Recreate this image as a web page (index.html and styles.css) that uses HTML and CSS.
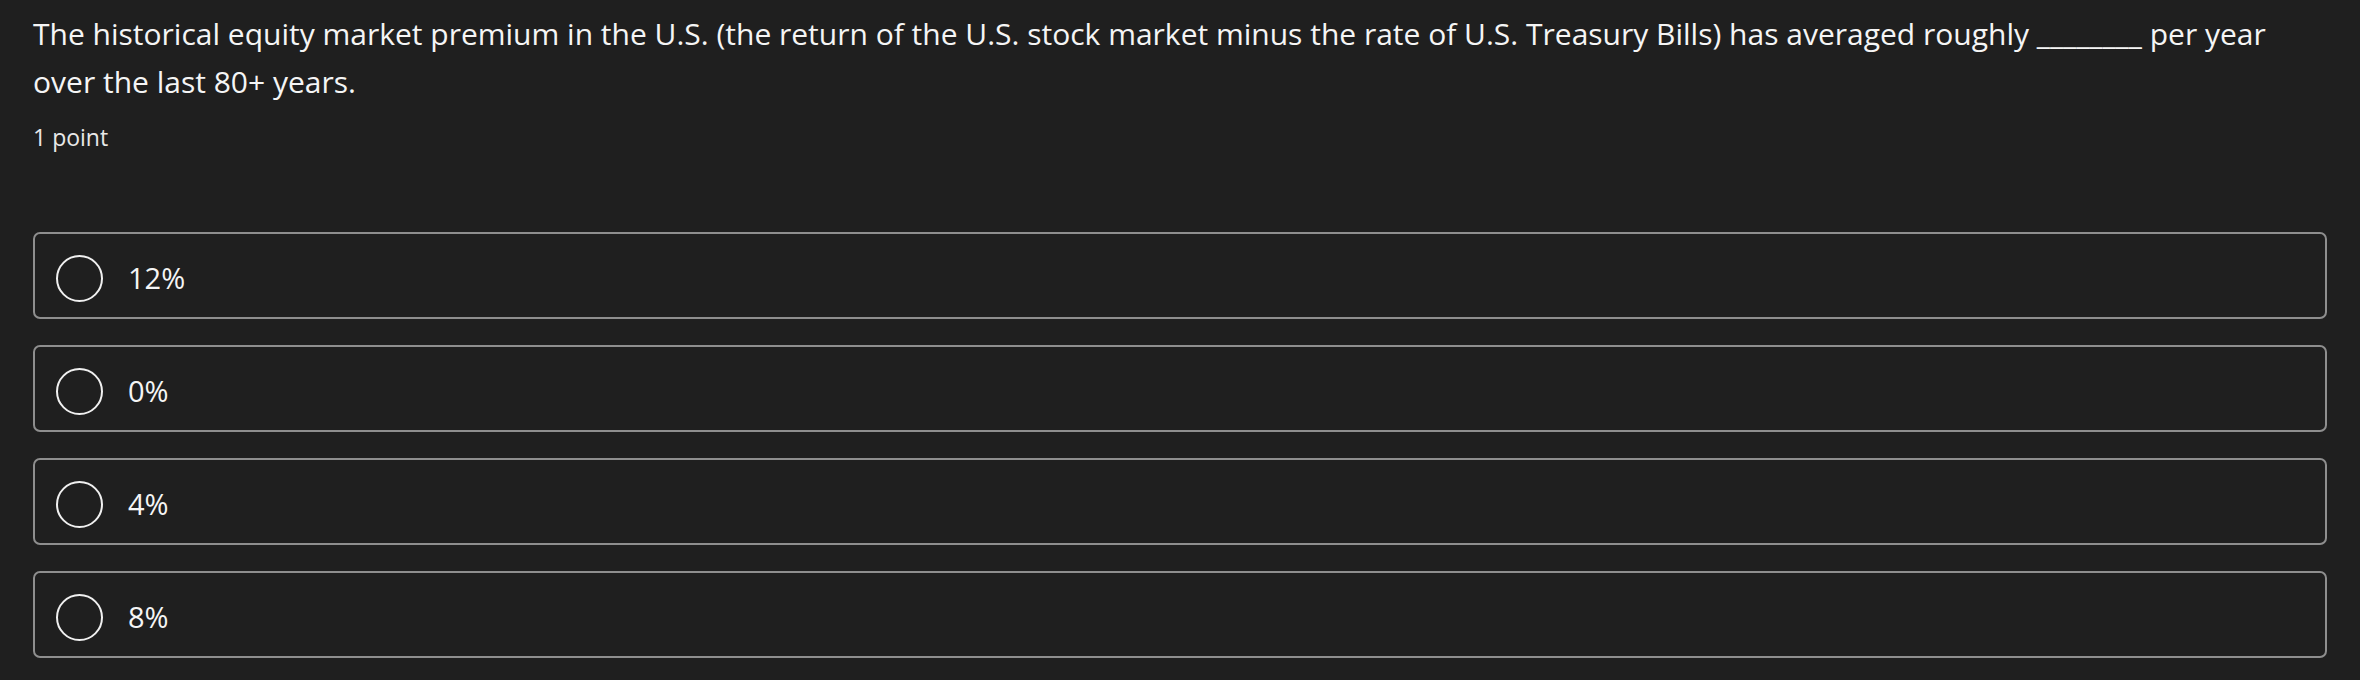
FILE: index.html
```html
<!DOCTYPE html>
<html lang="en">
<head>
<meta charset="utf-8">
<title>Quiz question</title>
<link rel="stylesheet" href="styles.css">
</head>
<body>
<main class="question">
  <div class="prompt">
    <p class="prompt-text">The historical equity market premium in the U.S. (the return of the U.S. stock market minus the rate of U.S. Treasury Bills) has averaged roughly ________ per year over the last 80+ years.</p>
    <div class="points">1 point</div>
  </div>
  <div class="options" role="radiogroup">
    <label class="option"><span class="radio"></span><span class="option-text">12%</span></label>
    <label class="option"><span class="radio"></span><span class="option-text">0%</span></label>
    <label class="option"><span class="radio"></span><span class="option-text">4%</span></label>
    <label class="option"><span class="radio"></span><span class="option-text">8%</span></label>
  </div>
</main>
</body>
</html>
```
FILE: styles.css
```css
html, body {
  margin: 0;
  padding: 0;
  background: #1f1f1f;
}
body {
  font-family: "Open Sans", "Noto Sans", sans-serif;
  color: #f5f5f5;
}
.question {
  width: 2294px;
  padding: 10px 0 0 33px;
  display: flex;
  flex-direction: column;
}
.prompt-text {
  margin: 0;
  font-size: 30px;
  line-height: 48px;
}
.points {
  margin-top: 15px;
  font-size: 23px;
  line-height: 32px;
  color: #e8e8e8;
}
.options {
  margin-top: 79px;
  display: flex;
  flex-direction: column;
  gap: 26px;
}
.option {
  box-sizing: border-box;
  height: 87px;
  border: 2px solid #8e8e8e;
  border-radius: 7px;
  display: flex;
  align-items: center;
  padding-left: 21px;
  gap: 25px;
}
.radio {
  box-sizing: border-box;
  width: 47px;
  height: 47px;
  border: 2px solid #f0f0f0;
  border-radius: 50%;
  margin-top: 6px;
  flex: none;
}
.option-text {
  font-size: 29px;
  line-height: 40px;
  margin-top: 4px;
}
```
